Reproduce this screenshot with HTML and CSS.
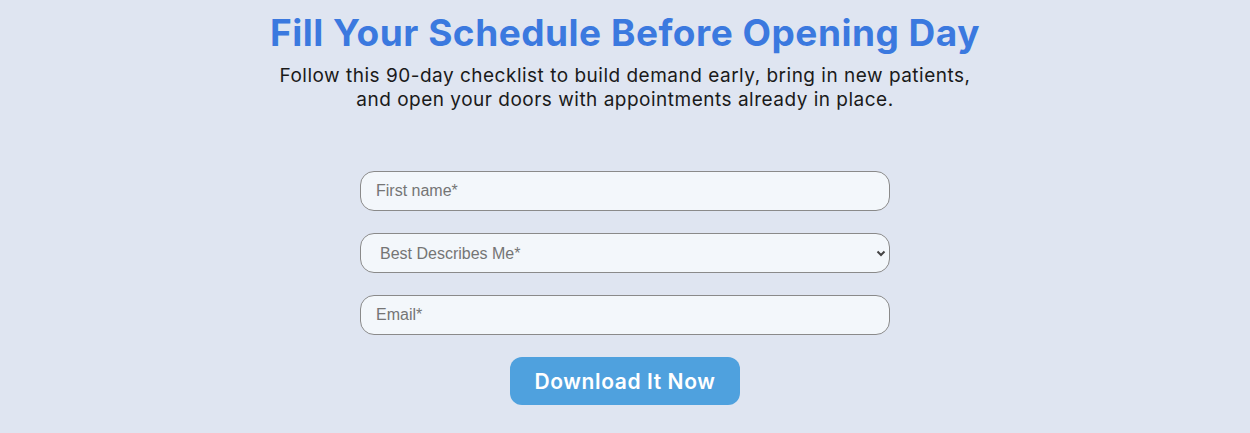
FILE: index.html
```html
<!DOCTYPE html>
<html lang="en">
<head>
<meta charset="utf-8">
<title>Fill Your Schedule Before Opening Day</title>
<link rel="stylesheet" href="styles.css">
</head>
<body>
<main class="page">
  <h1 class="title">Fill Your Schedule Before Opening Day</h1>
  <p class="subtitle">Follow this 90-day checklist to build demand early, bring in new patients,<br>and open your doors with appointments already in place.</p>
  <form class="form">
    <input class="field" type="text" placeholder="First name*">
    <div class="select-wrap">
      <select class="field select">
        <option>Best Describes Me*</option>
      </select>
      <svg class="chev" width="10" height="7" viewBox="0 0 10 7"><path d="M1.5 1.5 L5 5 L8.5 1.5" fill="none" stroke="#444" stroke-width="2"/></svg>
    </div>
    <input class="field" type="email" placeholder="Email*">
    <button class="btn" type="button">Download It Now</button>
  </form>
</main>
</body>
</html>
```
FILE: styles.css
```css
html, body {
  margin: 0;
  padding: 0;
  background: #dfe5f1;
}
.page {
  display: flex;
  flex-direction: column;
  align-items: center;
  padding-top: 10px;
}
.title {
  margin: 0;
  font-family: "Inter", sans-serif;
  font-weight: 700;
  font-size: 37px;
  line-height: 46px;
  letter-spacing: 0.5px;
  color: #3b79df;
}
.subtitle {
  margin: 8px 0 0;
  font-family: "Inter", sans-serif;
  font-size: 19px;
  line-height: 24px;
  letter-spacing: 0.5px;
  color: #1a1a1a;
  text-align: center;
}
.form {
  margin-top: 59px;
  width: 530px;
  display: flex;
  flex-direction: column;
  align-items: center;
  gap: 22px;
}
.field {
  box-sizing: border-box;
  width: 530px;
  height: 40px;
  border: 1px solid #8a8a8a;
  border-radius: 14px;
  background: #f3f7fb;
  padding: 0 15px;
  font-family: "Liberation Sans", Arial, sans-serif;
  font-size: 16px;
  color: #757575;
  outline: none;
}
.field::placeholder {
  color: #757575;
}
.select-wrap {
  position: relative;
  width: 530px;
}
.select {
  appearance: none;
  -webkit-appearance: none;
  padding-left: 19px;
}
.chev {
  position: absolute;
  right: 4px;
  top: 17px;
  pointer-events: none;
}
.btn {
  width: 230px;
  height: 48px;
  border: none;
  border-radius: 12px;
  background: #4fa1de;
  color: #fff;
  font-family: "Inter", sans-serif;
  font-weight: 600;
  font-size: 21px;
  letter-spacing: 0.6px;
  cursor: pointer;
}
```
